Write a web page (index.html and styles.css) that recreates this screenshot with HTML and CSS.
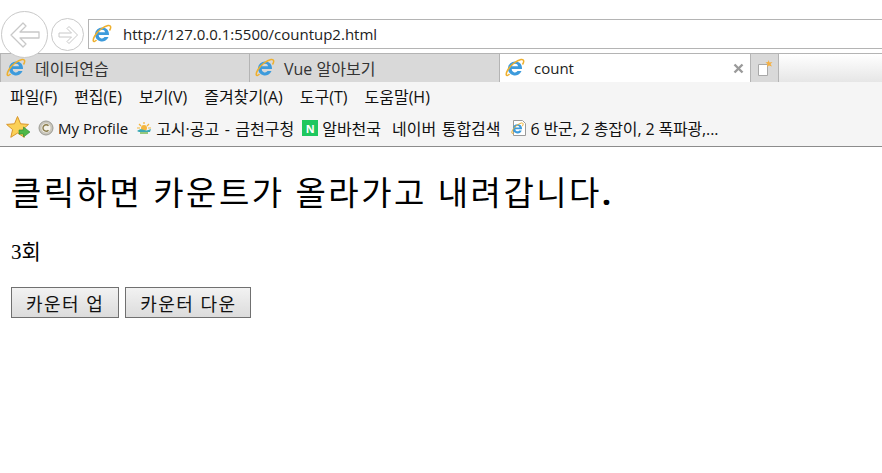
FILE: index.html
```html
<!DOCTYPE html>
<html lang="ko">

<head>
  <meta charset="UTF-8" />
  <meta name="viewport" content="width=device-width, initial-scale=1.0" />
  <title>count</title>
  <link rel="stylesheet" href="styles.css">
</head>

<body>
  <svg class="defs" width="0" height="0">
    <symbol id="ie" viewBox="0 0 20 20">
      <path d="M10 3.5a7 7 0 1 0 6.500 9.500h-4a3.200 3.200 0 0 1-5.800-2H17C17.300 6.500 14.500 3.500 10 3.500zM6.800 8.300a3.300 3.300 0 0 1 6.400 0z" fill="#3d9bdc" fill-rule="evenodd" />
      <path d="M4.500 16C1 19.500 0 16.500 3 11.500 6 6.500 12 2.500 16 1.500c3-.6 3.500 2 1.500 5" fill="none" stroke="#eeb02e" stroke-width="1.500" />
    </symbol>
  </svg>

  <header class="browser">
    <div class="addressRow">
      <button class="navBtn back">
        <svg width="32" height="28" viewBox="0 0 32 28">
          <path d="M14 2 2 14l12 12 3-3-6-6h19v-6H11l6-6z" fill="#fff" stroke="#c8c8c8" stroke-width="1.300" stroke-linejoin="round" />
        </svg>
      </button>
      <button class="navBtn forward">
        <svg width="22" height="20" viewBox="0 0 22 20">
          <path d="M12 1.500l8.500 8.500-8.500 8.500-2-2 4.500-4.500H2V8h12.500L10 3.500z" fill="#fff" stroke="#c8c8c8" stroke-linejoin="round" />
        </svg>
      </button>
      <div class="addressBar">
        <svg class="icon"><use href="#ie" /></svg>
        <span class="url">http://127.0.0.1:5500/countup2.html</span>
      </div>
    </div>

    <div class="tabRow">
      <div class="tab">
        <svg class="icon"><use href="#ie" /></svg>
        <span>데이터연습</span>
      </div>
      <div class="tab">
        <svg class="icon"><use href="#ie" /></svg>
        <span>Vue 알아보기</span>
      </div>
      <div class="tab active">
        <svg class="icon"><use href="#ie" /></svg>
        <span>count</span>
        <svg class="close" width="11" height="11" viewBox="0 0 11 11">
          <path d="M1.500 1.500l8 8M9.500 1.500l-8 8" stroke="#9a9a9a" stroke-width="2.400" />
        </svg>
      </div>
      <div class="newTab">
        <svg width="16" height="17" viewBox="0 0 16 17">
          <path d="M1.500 4.500h9v11h-9z" fill="#fff" stroke="#a8a8a8" />
          <path d="M11.500 0l1 2.500 3-.5-2 2 1.500 2.500-3-1-2 1.500.5-3-2-1.500 2.500-.5z" fill="#f5b041" />
        </svg>
      </div>
    </div>

    <nav class="menuBar">
      <span>파일(F)</span>
      <span>편집(E)</span>
      <span>보기(V)</span>
      <span>즐겨찾기(A)</span>
      <span>도구(T)</span>
      <span>도움말(H)</span>
    </nav>

    <div class="favBar">
      <svg class="favStar" width="25" height="26" viewBox="0 0 25 25">
        <path d="M11.500 1l3.100 7.300 7.900.6-6 5.200 1.900 7.700-6.900-4.200-6.700 4.200 1.800-7.700L.6 8.900l7.900-.6z" fill="#fbd157" stroke="#d9962b" />
        <path d="M13 14.500h4.500v-3l6.500 5-6.500 5v-3H13z" fill="#4fb848" stroke="#2f8a33" stroke-width=".6" />
      </svg>
      <div class="fav">
        <svg width="16" height="16" viewBox="0 0 16 16">
          <circle cx="8" cy="8" r="7" fill="#c9c6bb" stroke="#9b9b94" />
          <circle cx="8" cy="8" r="4.500" fill="#f3f1e8" />
          <path d="M10.500 5.800a3.200 3.200 0 1 0 0 4.400" fill="none" stroke="#8a7c4c" stroke-width="1.400" />
        </svg>
        <span class="latin">My Profile</span>
      </div>
      <div class="fav">
        <svg width="16" height="16" viewBox="0 0 16 16">
          <circle cx="8" cy="8" r="3" fill="#f4b63d" />
          <path d="M8 2v2M3 4l2 2M13 4l-2 2M1 8h3M15 8h-3" stroke="#f4b63d" stroke-width="1.200" />
          <path d="M1 11c3-2 4-2 7-1s4 0 7-1l-1 3H3z" fill="#3aa9b5" />
          <path d="M4 13h8" stroke="#6fb54a" stroke-width="1.400" />
        </svg>
        <span>고시·공고 - 금천구청</span>
      </div>
      <div class="fav">
        <span class="naver">N</span>
        <span>알바천국</span>
      </div>
      <div class="fav noIcon">
        <span>네이버 통합검색</span>
      </div>
      <div class="fav">
        <svg width="16" height="16" viewBox="0 0 16 16">
          <path d="M2.500.5h9l3 3v12h-12z" fill="#fff" stroke="#9a9a9a" />
          <use href="#ie" x="0" y="2" width="13" height="13" />
        </svg>
        <span class="tight">6 반군, 2 총잡이, 2 폭파광,...</span>
      </div>
    </div>
  </header>

  <main class="page">
    <h1>클릭하면 카운트가 올라가고 내려갑니다<b>.</b></h1>
    <p class="count">3회</p>
    <div class="btns">
      <button class="counterBtn">카운터 업</button>
      <button class="counterBtn">카운터 다운</button>
    </div>
  </main>
</body>

</html>
```

FILE: styles.css
```css
* {
  margin: 0;
  padding: 0;
  box-sizing: border-box;
}

body {
  background-color: #fff;
  color: #000;
  font-family: "Open Sans", "Noto Sans CJK KR", sans-serif;
  overflow: hidden;
}

.defs {
  position: absolute;
}

.icon {
  width: 20px;
  height: 20px;
  flex: none;
}

/* browser chrome */
.addressRow {
  display: flex;
  align-items: flex-start;
  height: 53px;
  padding: 11px 0 0 1px;
}

.navBtn {
  display: flex;
  justify-content: center;
  align-items: center;
  flex: none;
  border: 1px solid #c9c9c9;
  border-radius: 50%;
  background-color: #fff;
}

.back {
  position: relative;
  z-index: 1;
  width: 47px;
  height: 47px;
}

.forward {
  width: 33px;
  height: 33px;
  margin: 7px 0 0 3px;
}

.addressBar {
  display: flex;
  align-items: center;
  flex: 1;
  height: 30px;
  margin: 8px 0 0 4px;
  padding-left: 3px;
  border: 1px solid #b4b4b4;
  border-right: none;
  font-size: 15px;
  color: #222;
}

.url {
  margin-left: 11px;
}

.tabRow {
  display: flex;
  height: 29px;
  border-top: 1px solid #b4b4b4;
  background: linear-gradient(#fff, #e6e6e6);
}

.tab {
  display: flex;
  align-items: center;
  width: 250px;
  padding-left: 5px;
  border-right: 1px solid #b4b4b4;
  background-color: #d9d9d9;
  font-size: 16px;
  color: #333;
}

.tab:first-child {
  border-left: 1px solid #b4b4b4;
}

.tab span {
  margin-left: 9px;
}

.tab.active {
  background-color: #fff;
  color: #222;
  border-right: none;
  font-size: 15px;
}

.close {
  margin-left: auto;
  margin-right: 6px;
}

.newTab {
  display: flex;
  justify-content: center;
  align-items: center;
  width: 29px;
  border: 1px solid #b4b4b4;
  border-top: none;
  border-bottom: none;
  background-color: #d9d9d9;
}

.menuBar {
  display: flex;
  gap: 17px;
  align-items: center;
  height: 30px;
  padding: 0 0 3px 10px;
  background-color: #f5f5f5;
  font-size: 16px;
  color: #111;
}

.favBar {
  display: flex;
  align-items: center;
  height: 35px;
  padding: 0 0 2px 6px;
  background-color: #f5f5f5;
  border-bottom: 1px solid #8c8c8c;
  font-size: 16px;
  word-spacing: 1.300px;
  color: #111;
}

.favStar {
  margin-right: 7px;
}

.fav {
  display: flex;
  align-items: center;
  gap: 4px;
  margin-right: 8px;
}

.latin {
  font-size: 15px;
  word-spacing: 0;
}

.tight {
  letter-spacing: -.15px;
  word-spacing: 0;
  white-space: nowrap;
}

.noIcon {
  margin-left: 3px;
  margin-right: 10px;
}

.naver {
  display: flex;
  justify-content: center;
  align-items: center;
  width: 16px;
  height: 16px;
  background-color: #1ec75e;
  color: #fff;
  font-size: 11px;
  font-weight: bold;
}

/* page */
.page {
  padding: 26px 11px 0;
}

h1 {
  font-size: 33px;
  font-weight: normal;
  line-height: 40px;
  letter-spacing: 2.450px;
  white-space: nowrap;
}

.count {
  margin-top: 27px;
  font-family: "Liberation Serif", "Noto Sans CJK KR", serif;
  font-size: 21px;
  line-height: 24px;
}

.btns {
  display: flex;
  gap: 6px;
  margin-top: 23px;
}

.counterBtn {
  height: 31px;
  padding: 0 14px;
  border: 1px solid #707070;
  background: linear-gradient(#f2f2f2, #dcdcdc);
  font-family: "Liberation Sans", "Noto Sans CJK KR", sans-serif;
  font-size: 18px;
  letter-spacing: 1.400px;
  color: #111;
}
```
